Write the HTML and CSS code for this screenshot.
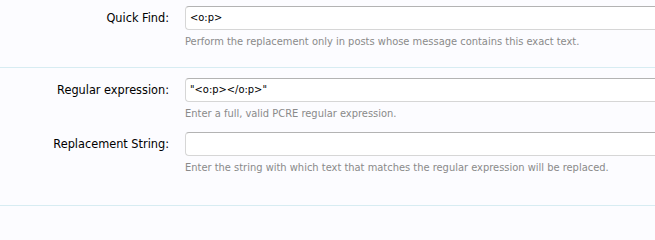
FILE: index.html
```html
<!DOCTYPE html>
<html>
<head>
<meta charset="utf-8">
<link rel="stylesheet" href="styles.css">
</head>
<body>
<div class="form">
  <fieldset class="section">
    <div class="row">
      <label class="label">Quick Find:</label>
      <div class="field">
        <div class="input">&lt;o:p&gt;</div>
        <p class="hint">Perform the replacement only in posts whose message contains this exact text.</p>
      </div>
    </div>
  </fieldset>
  <fieldset class="section last">
    <div class="row">
      <label class="label">Regular expression:</label>
      <div class="field">
        <div class="input">"&lt;o:p&gt;&lt;/o:p&gt;"</div>
        <p class="hint">Enter a full, valid PCRE regular expression.</p>
      </div>
    </div>
    <div class="row">
      <label class="label">Replacement String:</label>
      <div class="field">
        <div class="input"></div>
        <p class="hint">Enter the string with which text that matches the regular expression will be replaced.</p>
      </div>
    </div>
  </fieldset>
</div>
</body>
</html>
```
FILE: styles.css
```css
html, body {
  margin: 0;
  padding: 0;
  background: #fcfcff;
}
body {
  font-family: "DejaVu Sans Condensed", "DejaVu Sans", sans-serif;
  color: #000;
  height: 210px;
  overflow: hidden;
}
.form {
  width: 100%;
}
.section {
  margin: 0;
  padding: 0;
  border: 0;
  border-bottom: 1px solid #d7ecf2;
}
.section:first-child {
  padding-top: 6px;
  padding-bottom: 18px;
}
.section.last {
  padding-top: 10px;
  padding-bottom: 30px;
}
.row {
  display: flex;
  align-items: flex-start;
}
.row + .row {
  margin-top: 11px;
}
.label {
  width: 169px;
  text-align: right;
  font-size: 12.6px;
  line-height: 24px;
  padding-right: 16px;
  flex: none;
}
.field {
  flex: 1;
  min-width: 0;
}
.input {
  height: 22px;
  border: 1px solid #d6d6d6;
  border-top-color: #b3b3b3;
  border-right: 0;
  border-radius: 4px 0 0 4px;
  background: #fff;
  font-size: 11px;
  line-height: 22px;
  padding-left: 4px;
}
.hint {
  margin: 5px 0 0;
  font-size: 11px;
  line-height: 14px;
  color: #8a8a8a;
  white-space: nowrap;
}
```
